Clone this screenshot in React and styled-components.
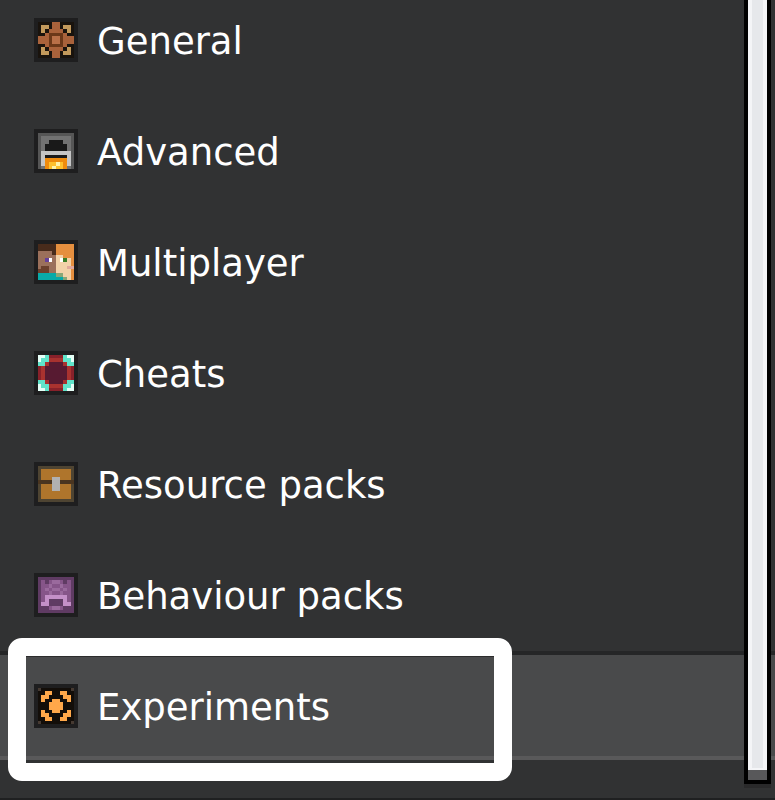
import { useState } from 'react';
import styled, { createGlobalStyle } from 'styled-components';

const GlobalStyle = createGlobalStyle`
	* {
		box-sizing: border-box;
	}

	body {
		margin: 0;
		background-color: #313233;
	}
`;

const Panel = styled.main`
	position: relative;
	min-height: 100vh;
	overflow: hidden;
	background-color: #313233;
	border-bottom: 2px solid #1f2021;
`;

const Menu = styled.nav`
	display: flex;
	flex-direction: column;
`;

const Item = styled.button`
	position: relative;
	display: flex;
	align-items: center;
	gap: 19px;
	width: 100%;
	margin: 0 0 2px;
	padding: 29px 34px 28px;
	border: solid transparent;
	border-width: 4px 0;
	border-color: ${(props) => (props.$active ? '#252627 transparent #59595a' : 'transparent')};
	background-color: ${(props) => (props.$active ? '#494a4b' : 'transparent')};
	color: #fff;
	text-align: left;
	cursor: pointer;

	&:first-child {
		padding-top: 14px;
	}
`;

const Label = styled.span`
	padding-top: 4px;
	font-family: 'DejaVu Sans', sans-serif;
	font-size: 37px;
	line-height: 40px;
`;

const Highlight = styled.span`
	position: absolute;
	top: -17px;
	bottom: -25px;
	left: 8px;
	width: 504px;
	max-width: calc(100% - 48px);
	border: 18px solid #fff;
	border-radius: 14px;
	box-shadow: inset 0 1px #2c2c2d;
	pointer-events: none;
`;

const Icon = styled.svg`
	flex: none;
	width: 44px;
	height: 44px;
	background-color: #1e1e1f;
`;

const Track = styled.div`
	position: absolute;
	top: 0;
	right: 4px;
	bottom: 14px;
	width: 27px;
	padding-bottom: 10px;
	border: solid #000;
	border-width: 0 4px 4px;
	background-color: #58585a;
	box-shadow: 0 4px #29292a;
`;

const Thumb = styled.div`
	height: 100%;
	border: solid #f4f5f7;
	border-width: 0 4px 2px;
	background-color: #e6e8eb;
`;

const icons = {
	gear: {
		colors: { k: '#19130d', b: '#a9623b', d: '#6b3819', o: '#b97048', t: '#c39a5c' },
		rows: [
			'kkkkbbkkkk',
			'kttkbbkttk',
			'ktkbbbbktk',
			'kkbddddbkk',
			'bbbdoodbbb',
			'bbbdoodbbb',
			'kkbddddbkk',
			'ktkbbbbktk',
			'kttkbbkttk',
			'kkkkbbkkkk',
		],
	},
	furnace: {
		colors: { g: '#565656', h: '#727272', k: '#191919', l: '#c5c5c5', o: '#ef8b0c', y: '#ffc12d', w: '#fff3a8' },
		rows: [
			'gggggggggg',
			'ghhhhhhhhg',
			'ghhkkkkhhg',
			'ghkkkkkkhg',
			'ghkkkkkkhg',
			'gllllllllg',
			'glkkkkkklg',
			'gloooooolg',
			'gloyywyolg',
			'ghoywyyohg',
		],
	},
	players: {
		colors: {
			h: '#482b1b',
			s: '#9b705b',
			d: '#6b402c',
			p: '#65409a',
			w: '#ffffff',
			o: '#e58f3f',
			f: '#f2d2a9',
			g: '#397d26',
			r: '#e2a99b',
			t: '#08aaa8',
			v: '#8aa777',
		},
		rows: [
			'hhhhhooooo',
			'hhhhhooooo',
			'sssshooooo',
			'sssssffooo',
			'sspwsfwgfo',
			'sssssffffo',
			'sddssfffrr',
			'dddssffffo',
			'tttttvvffo',
			'tttttttvfo',
		],
	},
	cheats: {
		colors: { w: '#e6fff7', c: '#61e4ca', r: '#88212a', a: '#a9322f', m: '#571a31' },
		rows: [
			'wwcrrrrcww',
			'wccaaaaccw',
			'ccammmmacc',
			'rammmmmmar',
			'rammmmmmar',
			'rammmmmmar',
			'rammmmmmar',
			'ccammmmacc',
			'wccaaaaccw',
			'wwcrrrrcww',
		],
	},
	chest: {
		colors: { f: '#4e4432', o: '#af752c', k: '#4a3520', g: '#b1b1b1' },
		rows: [
			'ffffffffff',
			'foooooooof',
			'foooooooof',
			'foooggooof',
			'kkkkggkkkk',
			'foooggooof',
			'foooggooof',
			'foooooooof',
			'foooooooof',
			'ffffffffff',
		],
	},
	shulker: {
		colors: { d: '#5f3b63', m: '#865589', n: '#9a6a9d', l: '#c490c8' },
		rows: [
			'dddddddddd',
			'dmdmnnmdmd',
			'dmmnmmnmmd',
			'dmnmnnmnmd',
			'dmmnmmnmmd',
			'dmllllllmd',
			'dmlddddlmd',
			'dllddddlld',
			'dddmnnmddd',
			'dddddddddd',
		],
	},
	lamp: {
		colors: { k: '#130e09', c: '#463a32', o: '#ffa84a' },
		rows: [
			'ckkkkkkkkc',
			'kkookkookk',
			'kookkkkook',
			'kokkookkok',
			'kkkooookkk',
			'kkkooookkk',
			'kokkookkok',
			'kookkkkook',
			'kkookkookk',
			'ckkkkkkkkc',
		],
	},
};

const items = [
	{ label: 'General', icon: 'gear' },
	{ label: 'Advanced', icon: 'furnace' },
	{ label: 'Multiplayer', icon: 'players' },
	{ label: 'Cheats', icon: 'cheats' },
	{ label: 'Resource packs', icon: 'chest' },
	{ label: 'Behaviour packs', icon: 'shulker' },
	{ label: 'Experiments', icon: 'lamp' },
];

const PixelIcon = ({ name }) => {
	const { colors, rows } = icons[name];
	return (
		<Icon viewBox='-1 -1 12 12' shapeRendering='crispEdges' aria-hidden='true'>
			{rows.map((row, y) =>
				[...row].map((key, x) => <rect key={`${x}-${y}`} x={x} y={y} width='1' height='1' fill={colors[key]} />)
			)}
		</Icon>
	);
};

const App = () => {
	const [active, setActive] = useState('Experiments');

	return (
		<Panel>
			<GlobalStyle />
			<Menu>
				{items.map(({ label, icon }) => (
					<Item
						key={label}
						type='button'
						$active={label === active}
						aria-current={label === active ? 'page' : undefined}
						onClick={() => setActive(label)}
					>
						<PixelIcon name={icon} />
						<Label>{label}</Label>
						{label === active && <Highlight />}
					</Item>
				))}
			</Menu>
			<Track>
				<Thumb />
			</Track>
		</Panel>
	);
};

export default App;
